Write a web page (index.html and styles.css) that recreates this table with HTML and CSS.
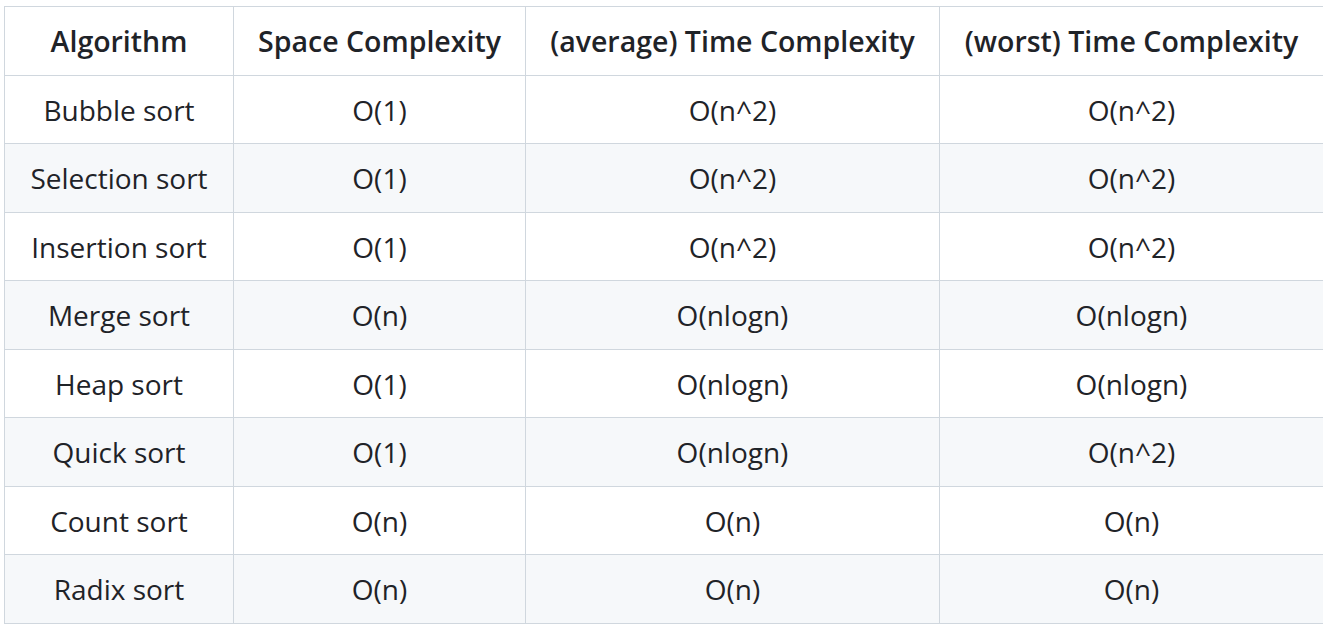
FILE: index.html
```html
<!DOCTYPE html>
<html>
<head>
<meta charset="utf-8">
<link rel="stylesheet" href="styles.css">
</head>
<body>
<div class="wrap">
<table class="tbl">
<colgroup>
<col class="c1"><col class="c2"><col class="c3"><col class="c4">
</colgroup>
<thead>
<tr><th>Algorithm</th><th>Space Complexity</th><th>(average) Time Complexity</th><th>(worst) Time Complexity</th></tr>
</thead>
<tbody>
<tr><td>Bubble sort</td><td>O(1)</td><td>O(n^2)</td><td>O(n^2)</td></tr>
<tr><td>Selection sort</td><td>O(1)</td><td>O(n^2)</td><td>O(n^2)</td></tr>
<tr><td>Insertion sort</td><td>O(1)</td><td>O(n^2)</td><td>O(n^2)</td></tr>
<tr><td>Merge sort</td><td>O(n)</td><td>O(nlogn)</td><td>O(nlogn)</td></tr>
<tr><td>Heap sort</td><td>O(1)</td><td>O(nlogn)</td><td>O(nlogn)</td></tr>
<tr><td>Quick sort</td><td>O(1)</td><td>O(nlogn)</td><td>O(n^2)</td></tr>
<tr><td>Count sort</td><td>O(n)</td><td>O(n)</td><td>O(n)</td></tr>
<tr><td>Radix sort</td><td>O(n)</td><td>O(n)</td><td>O(n)</td></tr>
</tbody>
</table>
</div>
</body>
</html>
```
FILE: styles.css
```css
html, body {
  margin: 0;
  padding: 0;
  background: #ffffff;
}
.wrap {
  padding: 6px 0 0 4px;
}
.tbl {
  border-collapse: collapse;
  table-layout: fixed;
  width: 1319px;
  font-family: "Open Sans", "Noto Sans", sans-serif;
  font-size: 28px;
  color: #1f2328;
}
.c1 { width: 229px; }
.c2 { width: 292px; }
.c3 { width: 414px; }
.c4 { width: 384px; }
.tbl th, .tbl td {
  border: 1px solid #d0d7de;
  padding: 12px 0 10px;
  line-height: 45.5px;
  text-align: center;
  white-space: nowrap;
}
.tbl th {
  font-weight: 600;
  font-size: 28.5px;
}
.tbl tbody tr:nth-child(even) {
  background: #f6f8fa;
}
```
